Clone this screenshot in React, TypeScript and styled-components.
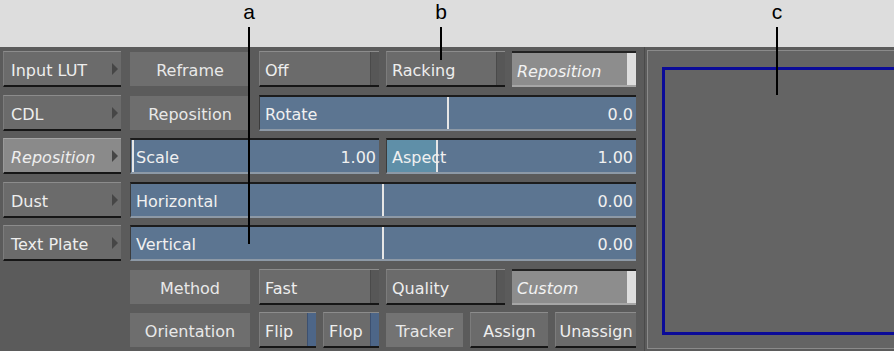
import React from "react";
import styled, { createGlobalStyle, css } from "styled-components";

const GlobalStyle = createGlobalStyle`
  html, body {
    margin: 0;
    padding: 0;
    background: #dddddd;
  }
  * {
    box-sizing: border-box;
  }
`;

const UI_FONT = `"DejaVu Sans", "Liberation Sans", sans-serif`;

const Page = styled.div`
  position: relative;
  width: 894px;
  height: 351px;
  overflow: hidden;
  background: #dddddd;
  font-family: ${UI_FONT};
`;

const Header = styled.div`
  height: 47px;
  background: #dddddd;
`;

const Panel = styled.div`
  display: flex;
  height: 304px;
  background: #5b5b5b;
  padding: 4px 0 0 3px;
`;

const SideColumn = styled.div`
  display: flex;
  flex-direction: column;
  gap: 7.5px;
  width: 118px;
  flex: none;
`;

const SideButton = styled.div<{ $active?: boolean }>`
  display: flex;
  align-items: center;
  justify-content: space-between;
  height: 36px;
  padding: 4px 3px 0 7px;
  background: ${(p) => (p.$active ? "#8a8a8a" : "#6b6b6b")};
  border-top: 1px solid ${(p) => (p.$active ? "#a4a4a4" : "#8c8c8c")};
  border-left: 1px solid ${(p) => (p.$active ? "#9a9a9a" : "#7c7c7c")};
  border-bottom: 2px solid #161616;
  color: #eeeeee;
  font-size: 16px;
  font-style: ${(p) => (p.$active ? "italic" : "normal")};
  white-space: nowrap;
`;

const Arrow = styled.span`
  width: 0;
  height: 0;
  margin-top: -3px;
  border-top: 6px solid transparent;
  border-bottom: 6px solid transparent;
  border-left: 6px solid #464646;
`;

const Controls = styled.div`
  display: grid;
  grid-template-columns: 122px 120px 119px 124px;
  grid-auto-rows: 36px;
  column-gap: 7px;
  row-gap: 7.5px;
  margin-left: 9px;
  width: 506px;
  flex: none;
`;

const Cell = styled.div<{ $span?: number }>`
  display: flex;
  gap: 7px;
  min-width: 0;
  grid-column: span ${(p) => p.$span ?? 1};
`;

const LabelBox = styled.div<{ $light?: boolean; $w?: number }>`
  display: flex;
  align-items: center;
  justify-content: center;
  width: ${(p) => p.$w ?? 120}px;
  height: 34px;
  margin-top: 1px;
  padding-top: 3px;
  background: ${(p) => (p.$light ? "#737373" : "#6e6e6e")};
  color: #e8e8e8;
  font-size: 16px;
  white-space: nowrap;
  flex: none;
`;

const Button = styled.div<{ $w?: number }>`
  display: flex;
  align-items: stretch;
  height: 36px;
  ${(p) =>
    p.$w
      ? css`
          width: ${p.$w}px;
          flex: none;
        `
      : css`
          flex: 1;
        `}
  background: #6b6b6b;
  border-top: 1px solid #8c8c8c;
  border-left: 1px solid #7c7c7c;
  border-bottom: 2px solid #161616;
  color: #eeeeee;
  font-size: 16px;
`;

const ButtonText = styled.span<{ $center?: boolean }>`
  flex: 1;
  display: flex;
  align-items: center;
  justify-content: ${(p) => (p.$center ? "center" : "flex-start")};
  padding-left: ${(p) => (p.$center ? "0" : "5px")};
  padding-top: 4px;
  white-space: nowrap;
`;

const Tail = styled.span<{ $blue?: boolean }>`
  width: 9px;
  flex: none;
  background: ${(p) => (p.$blue ? "#4d6688" : "#575757")};
  border-left: 1px solid ${(p) => (p.$blue ? "#3c5070" : "#4a4a4a")};
`;

const Toggle = styled.div`
  display: flex;
  align-items: stretch;
  flex: 1;
  height: 36px;
  background: #8d8d8d;
  border-top: 2px solid #222222;
  border-bottom: 2px solid #a6a6a6;
  color: #f2f2f2;
  font-size: 16px;
  font-style: italic;
`;

const ToggleStrip = styled.span`
  width: 9px;
  flex: none;
  background: #dedede;
`;

const Slider = styled.div`
  position: relative;
  display: flex;
  align-items: center;
  justify-content: space-between;
  flex: 1;
  height: 36px;
  padding: 3px 3px 0 5px;
  background: #5c7591;
  border-top: 2px solid #1c1c1c;
  border-left: 1px solid #3c3c3c;
  border-bottom: 2px solid #8d99a6;
  color: #f0f0f0;
  font-size: 16px;
  overflow: hidden;
`;

const SliderFill = styled.div<{ $at: number }>`
  position: absolute;
  left: 0;
  top: 0;
  bottom: 0;
  width: ${(p) => p.$at}px;
  background: #5f8fa8;
`;

const SliderMark = styled.div<{ $at: number }>`
  position: absolute;
  top: 0;
  bottom: 0;
  left: ${(p) => p.$at}px;
  width: 2px;
  background: #e6e6e6;
`;

const SliderText = styled.span`
  position: relative;
  white-space: nowrap;
`;

const Viewer = styled.div`
  flex: 1;
  margin-left: 8px;
  margin-top: -4px;
  padding: 3px 0 2px 2px;
  border-left: 1px solid #4a4a4a;
  display: flex;
`;

const ViewerFrame = styled.div`
  flex: 1;
  background: #646464;
  border-top: 1px solid #8a8a8a;
  border-left: 1px solid #8a8a8a;
  border-bottom: 1px solid #8a8a8a;
  padding: 16px 0 13px 14px;
  display: flex;
  overflow: hidden;
`;

const SafeFrame = styled.div`
  flex: 1;
  margin-right: -20px;
  border: 3px solid #0b0b98;
`;

const Callout = styled.div<{ $x: number; $len: number }>`
  position: absolute;
  top: 0;
  left: ${(p) => p.$x - 10}px;
  width: 20px;
  display: flex;
  flex-direction: column;
  align-items: center;
  font-family: "Liberation Sans", Arial, sans-serif;
  font-size: 21px;
  line-height: normal;
  color: #000000;

  &::after {
    content: "";
    display: block;
    width: 2px;
    height: ${(p) => p.$len}px;
    margin-top: 3px;
    background: #000000;
  }
`;

const sideItems = ["Input LUT", "CDL", "Reposition", "Dust", "Text Plate"];

export default function App() {
  return (
    <>
      <GlobalStyle />
      <Page>
        <Header />
        <Panel>
          <SideColumn>
            {sideItems.map((name) => (
              <SideButton key={name} $active={name === "Reposition"}>
                {name}
                <Arrow />
              </SideButton>
            ))}
          </SideColumn>

          <Controls>
            <Cell>
              <LabelBox>Reframe</LabelBox>
            </Cell>
            <Cell>
              <Button>
                <ButtonText>Off</ButtonText>
                <Tail />
              </Button>
            </Cell>
            <Cell>
              <Button>
                <ButtonText>Racking</ButtonText>
                <Tail />
              </Button>
            </Cell>
            <Cell>
              <Toggle>
                <ButtonText>Reposition</ButtonText>
                <ToggleStrip />
              </Toggle>
            </Cell>

            <Cell>
              <LabelBox>Reposition</LabelBox>
            </Cell>
            <Cell $span={3}>
              <Slider>
                <SliderMark $at={187} />
                <SliderText>Rotate</SliderText>
                <SliderText>0.0</SliderText>
              </Slider>
            </Cell>

            <Cell $span={2}>
              <Slider>
                <SliderMark $at={1} />
                <SliderText>Scale</SliderText>
                <SliderText>1.00</SliderText>
              </Slider>
            </Cell>
            <Cell $span={2}>
              <Slider>
                <SliderFill $at={49} />
                <SliderMark $at={49} />
                <SliderText>Aspect</SliderText>
                <SliderText>1.00</SliderText>
              </Slider>
            </Cell>

            <Cell $span={4}>
              <Slider>
                <SliderMark $at={251} />
                <SliderText>Horizontal</SliderText>
                <SliderText>0.00</SliderText>
              </Slider>
            </Cell>

            <Cell $span={4}>
              <Slider>
                <SliderMark $at={251} />
                <SliderText>Vertical</SliderText>
                <SliderText>0.00</SliderText>
              </Slider>
            </Cell>

            <Cell>
              <LabelBox>Method</LabelBox>
            </Cell>
            <Cell>
              <Button>
                <ButtonText>Fast</ButtonText>
                <Tail />
              </Button>
            </Cell>
            <Cell>
              <Button>
                <ButtonText>Quality</ButtonText>
                <Tail />
              </Button>
            </Cell>
            <Cell>
              <Toggle>
                <ButtonText>Custom</ButtonText>
                <ToggleStrip />
              </Toggle>
            </Cell>

            <Cell>
              <LabelBox>Orientation</LabelBox>
            </Cell>
            <Cell>
              <Button $w={57}>
                <ButtonText>Flip</ButtonText>
                <Tail $blue />
              </Button>
              <Button>
                <ButtonText>Flop</ButtonText>
                <Tail $blue />
              </Button>
            </Cell>
            <Cell $span={2}>
              <LabelBox $light $w={77}>
                Tracker
              </LabelBox>
              <Button $w={78}>
                <ButtonText $center>Assign</ButtonText>
              </Button>
              <Button>
                <ButtonText $center>Unassign</ButtonText>
              </Button>
            </Cell>
          </Controls>

          <Viewer>
            <ViewerFrame>
              <SafeFrame />
            </ViewerFrame>
          </Viewer>
        </Panel>

        <Callout $x={249} $len={217}>a</Callout>
        <Callout $x={441} $len={33}>b</Callout>
        <Callout $x={777} $len={68}>c</Callout>
      </Page>
    </>
  );
}
